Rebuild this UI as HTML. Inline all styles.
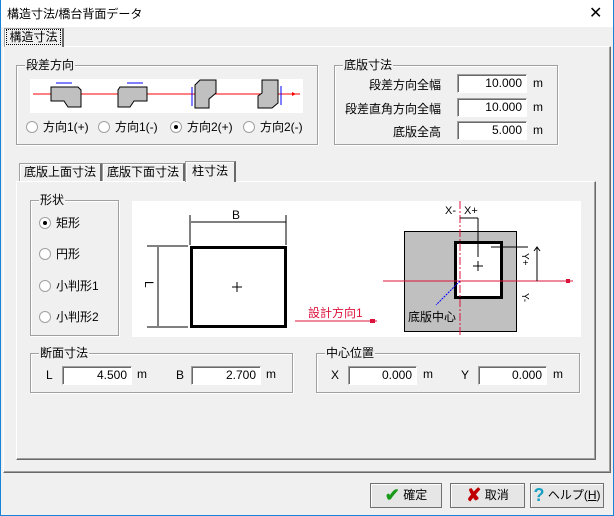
<!DOCTYPE html>
<html><head><meta charset="utf-8"><style>
*{box-sizing:border-box;margin:0;padding:0}
body{width:614px;height:516px;background:#f0f0f0;font-family:"Liberation Sans","Noto Sans CJK JP",sans-serif;font-size:12px;color:#000;position:relative;overflow:hidden}
.a{position:absolute}
.grp{position:absolute;border:1px solid #a0a0a0;box-shadow:inset 1px 1px 0 #fff,1px 1px 0 #fff}
.grp>.t{position:absolute;top:-9px;left:8px;background:#f0f0f0;padding:0 1px;font-size:12px;line-height:16px}
.inp{position:absolute;height:19px;background:#fff;border:1px solid;border-color:#a0a0a0 #fff #fff #a0a0a0;box-shadow:inset 1px 1px 0 #696969;text-align:right;padding-right:4px;line-height:17px;font-size:12px}
.rad{position:absolute;font-size:12px;line-height:14px;white-space:nowrap}
.rad i{display:inline-block;width:12px;height:12px;border-radius:50%;background:#fff;border:1px solid #a0a0a0;vertical-align:-2px;margin-right:5px;position:relative}
.rad i.on:after{content:"";position:absolute;left:3px;top:3px;width:4px;height:4px;border-radius:50%;background:#000}
.btn{position:absolute;height:25px;border:1px solid #707070;background:#e6e6e6;box-shadow:inset 1px 1px 0 #fff;font-size:12px;line-height:23px;text-align:center}
.tab{position:absolute;border:1px solid #a0a0a0;border-bottom:none;background:#f0f0f0;text-align:center;line-height:17px;box-shadow:inset 1px 1px 0 #fff}
</style></head><body>
<div class="a" style="left:0;top:0;width:614px;height:27px;background:#fff"></div>
<div class="a" style="left:7px;top:5px;font-size:12px;color:#000">構造寸法/橋台背面データ</div>
<div class="a" style="left:589px;top:3px;font-size:16px">✕</div>
<div class="a" style="left:0;top:0;width:1px;height:516px;background:#1883d7"></div>
<div class="a" style="left:613px;top:0;width:1px;height:516px;background:#1883d7"></div>
<div class="a" style="left:0;top:515px;width:614px;height:1px;background:#1883d7"></div>

<div class="a" style="left:3px;top:46px;width:608px;height:427px;border:1px solid;border-color:#fff #696969 #696969 #fff;box-shadow:inset -1px -1px 0 #a0a0a0"></div>
<div class="tab" style="left:4px;top:28px;width:60px;height:19px;border-right:2px solid #696969"><span style="border:1px dotted #000;padding:0 2px">構造寸法</span></div>

<div class="grp" style="left:16px;top:65px;width:302px;height:80px"><div class="t">段差方向</div></div>
<svg class="a" style="left:30px;top:79px" width="273" height="34">
<rect width="273" height="34" fill="#fff"/>
<line x1="3" y1="15" x2="270" y2="15" stroke="#f00" stroke-width="1"/>
<path d="M262 13 l4 2 l-4 2z" fill="#f00"/>
<polygon points="21,8 48,8 51,11 51,28 38,28 34,22 21,22" fill="#c0c0c0" stroke="#000"/>
<line x1="26" y1="4" x2="42" y2="4" stroke="#00f"/>
<polygon points="90,8 117,8 117,22 104,22 100,28 88,28 88,11" fill="#c0c0c0" stroke="#000"/>
<line x1="97" y1="4" x2="113" y2="4" stroke="#00f"/>
<polygon points="170,1 186,1 186,14 179,20 179,29 165,29 165,6" fill="#c0c0c0" stroke="#000"/>
<line x1="162" y1="8" x2="162" y2="27" stroke="#00f"/>
<polygon points="232,1 248,1 248,24 242,29 228,29 228,17 232,14" fill="#c0c0c0" stroke="#000"/>
<line x1="251" y1="7" x2="251" y2="26" stroke="#00f"/>
</svg>
<div class="rad" style="left:26px;top:120px"><i></i>方向1(+)</div>
<div class="rad" style="left:98px;top:120px"><i></i>方向1(-)</div>
<div class="rad" style="left:170px;top:120px"><i class="on"></i>方向2(+)</div>
<div class="rad" style="left:243px;top:120px"><i></i>方向2(-)</div>

<div class="grp" style="left:334px;top:65px;width:224px;height:80px"><div class="t">底版寸法</div></div>
<div class="a" style="left:340px;top:76px;width:101px;text-align:right">段差方向全幅</div>
<div class="a" style="left:340px;top:100px;width:101px;text-align:right">段差直角方向全幅</div>
<div class="a" style="left:340px;top:123px;width:101px;text-align:right">底版全高</div>
<div class="inp" style="left:457px;top:74px;width:70px">10.000</div>
<div class="inp" style="left:457px;top:98px;width:70px">10.000</div>
<div class="inp" style="left:457px;top:121px;width:70px">5.000</div>
<div class="a" style="left:533px;top:76px">m</div>
<div class="a" style="left:533px;top:100px">m</div>
<div class="a" style="left:533px;top:123px">m</div>

<div class="a" style="left:16px;top:181px;width:580px;height:279px;border:1px solid;border-color:#fff #696969 #696969 #fff;box-shadow:inset -1px -1px 0 #a0a0a0"></div>
<div class="tab" style="left:19px;top:163px;width:83px;height:18px;border-right:2px solid #696969">底版上面寸法</div>
<div class="tab" style="left:102px;top:163px;width:83px;height:18px;border-right:2px solid #696969">底版下面寸法</div>
<div class="tab" style="left:185px;top:161px;width:51px;height:21px;border-right:2px solid #696969;line-height:19px">柱寸法</div>

<div class="grp" style="left:30px;top:200px;width:89px;height:136px"><div class="t">形状</div></div>
<div class="rad" style="left:39px;top:216px"><i class="on"></i>矩形</div>
<div class="rad" style="left:39px;top:247px"><i></i>円形</div>
<div class="rad" style="left:39px;top:279px"><i></i>小判形1</div>
<div class="rad" style="left:39px;top:310px"><i></i>小判形2</div>

<svg class="a" style="left:132px;top:201px" width="449" height="136" font-family="Liberation Sans" font-size="12">
<rect width="449" height="136" fill="#fff"/>
<text x="100" y="18">B</text>
<line x1="59" y1="21" x2="154" y2="21" stroke="#000"/>
<line x1="58" y1="14" x2="58" y2="44" stroke="#000"/>
<line x1="154" y1="14" x2="154" y2="44" stroke="#000"/>
<line x1="26" y1="46" x2="26" y2="125" stroke="#000"/>
<line x1="15" y1="45" x2="56" y2="45" stroke="#000"/>
<line x1="15" y1="126" x2="56" y2="126" stroke="#000"/>
<text x="13" y="88" transform="rotate(90 17 84)">L</text>
<rect x="59.5" y="46.5" width="94" height="79" fill="none" stroke="#000" stroke-width="3"/>
<path d="M100 86h10M105 81v10" stroke="#000"/>
<text x="176" y="116" fill="#dc143c">設計方向1</text>
<line x1="163" y1="120" x2="245" y2="120" stroke="#dc143c"/>
<path d="M238 118h5v4h-5z" fill="#dc143c"/>
<rect x="272.5" y="30.5" width="112" height="100" fill="#c0c0c0" stroke="#000"/>
<rect x="323.5" y="41.5" width="46" height="55" fill="#fff" stroke="#000" stroke-width="3"/>
<line x1="328" y1="0" x2="328" y2="136" stroke="#dc143c" stroke-dasharray="8,2,2,2"/>
<line x1="251" y1="80" x2="441" y2="80" stroke="#dc143c"/>
<path d="M434 78h4v4h-4z" fill="#dc143c"/>
<text x="313" y="13" font-size="11">X-</text><text x="332" y="13" font-size="11">X+</text>
<line x1="328" y1="17" x2="346" y2="17" stroke="#000"/>
<line x1="346" y1="17" x2="346" y2="56" stroke="#000"/>
<path d="M341 65h10M346 60v10" stroke="#000"/>
<line x1="359" y1="46" x2="396" y2="46" stroke="#000"/><line x1="405" y1="46" x2="405" y2="80" stroke="#000"/>
<path d="M402 50l3-4l3 4" fill="none" stroke="#000"/>
<text x="390" y="60" font-size="10" transform="rotate(90 394 56)">Y+</text>
<text x="390" y="100" font-size="10" transform="rotate(90 394 96)">Y-</text>
<line x1="328" y1="80" x2="304" y2="104" stroke="#00f" stroke-dasharray="2,1"/>
<text x="276" y="120">底版中心</text>
</svg>

<div class="grp" style="left:30px;top:353px;width:263px;height:40px"><div class="t">断面寸法</div></div>
<div class="a" style="left:46px;top:368px">L</div>
<div class="inp" style="left:62px;top:366px;width:70px">4.500</div>
<div class="a" style="left:137px;top:367px">m</div>
<div class="a" style="left:176px;top:368px">B</div>
<div class="inp" style="left:191px;top:366px;width:70px">2.700</div>
<div class="a" style="left:266px;top:367px">m</div>

<div class="grp" style="left:316px;top:353px;width:264px;height:40px"><div class="t">中心位置</div></div>
<div class="a" style="left:331px;top:368px">X</div>
<div class="inp" style="left:348px;top:366px;width:69px">0.000</div>
<div class="a" style="left:423px;top:367px">m</div>
<div class="a" style="left:461px;top:368px">Y</div>
<div class="inp" style="left:478px;top:366px;width:69px">0.000</div>
<div class="a" style="left:553px;top:367px">m</div>

<div class="btn" style="left:370px;top:483px;width:72px"><span style="color:#1a9a1a;font-size:18px;font-weight:bold;vertical-align:-2px">✔</span> 確定</div>
<div class="btn" style="left:450px;top:483px;width:75px"><span style="color:#c00000;font-size:18px;font-weight:bold;vertical-align:-2px">✘</span> 取消</div>
<div class="btn" style="left:530px;top:483px;width:74px"><span style="color:#1aa0c0;font-size:18px;font-weight:bold;vertical-align:-2px">?</span> ヘルプ(<u>H</u>)</div>
</body></html>
